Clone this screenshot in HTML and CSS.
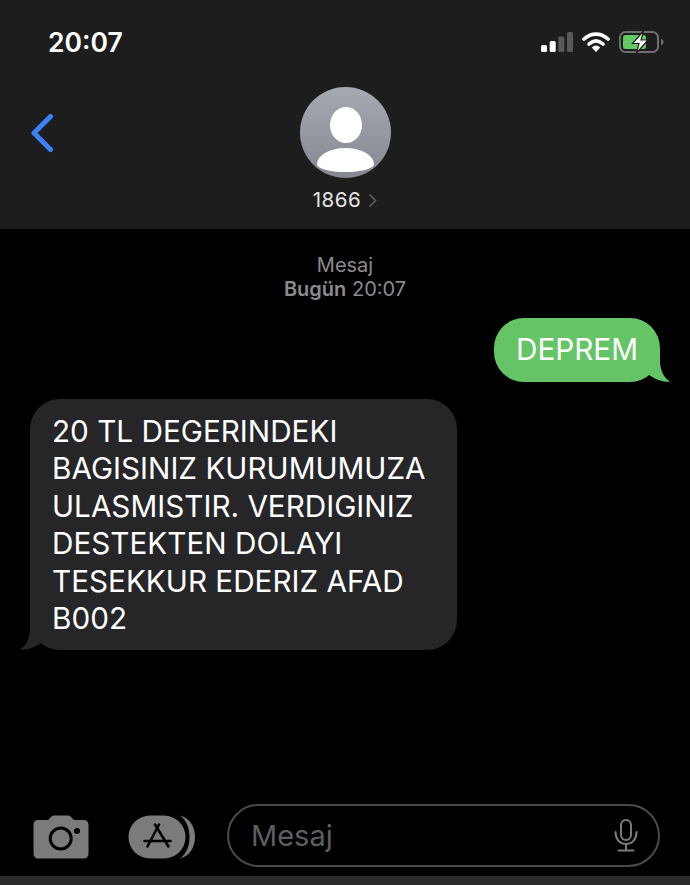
FILE: index.html
```html
<!DOCTYPE html>
<html lang="tr">
<head>
  <title>Mesaj</title>
  <meta content="width=device-width, initial-scale=1" name="viewport" />
  <link rel="stylesheet" href="styles.css">
</head>
<body>
  <header class="topBar">
    <div class="statusBar">
      <span class="clock">20:07</span>
      <div class="statusIcons">
        <svg class="signal" width="32" height="20" viewBox="0 0 32 20">
          <rect x="0" y="13" width="6" height="7" rx="1.5" fill="#fff"/>
          <rect x="8.700" y="9" width="6" height="11" rx="1.5" fill="#fff"/>
          <rect x="17.400" y="4.500" width="6" height="15.500" rx="1.5" fill="#59595b"/>
          <rect x="26" y="0" width="6" height="20" rx="1.5" fill="#59595b"/>
        </svg>
        <svg class="wifi" width="28" height="20" viewBox="0 0 28 20">
          <path d="M2 7C9.500 0.500 18.500 0.500 26 7" fill="none" stroke="#fff" stroke-width="3.600" stroke-linecap="round"/>
          <path d="M7 12C11.500 8 16.500 8 21 12" fill="none" stroke="#fff" stroke-width="3.600" stroke-linecap="round"/>
          <path d="M9.800 15.600C12.500 12.800 15.500 12.800 18.200 15.600L14 20Z" fill="#fff"/>
        </svg>
        <svg class="battery" width="45" height="22" viewBox="0 0 45 22">
          <rect x="1" y="1" width="38" height="20" rx="5.500" fill="none" stroke="#6f6f70" stroke-width="2"/>
          <rect x="4" y="4" width="23" height="14" rx="2.500" fill="#63c966"/>
          <path d="M42 8C44 8.600 44.500 9.800 44.500 11C44.500 12.200 44 13.400 42 14Z" fill="#6f6f70"/>
          <path d="M24.500 0L13.500 12.500H20L17.500 22L29 9H22Z" fill="#fff" stroke="#1d1d1d" stroke-width="1.200"/>
        </svg>
      </div>
    </div>
    <div class="contact">
      <svg class="backArrow" width="26" height="40" viewBox="0 0 26 40">
        <path d="M21.500 3.500L5 20L21.500 36.500" fill="none" stroke="#3b82f6" stroke-width="5" stroke-linecap="round" stroke-linejoin="round"/>
      </svg>
      <div class="avatar">
        <span class="avatarHead"></span>
        <span class="avatarBody"></span>
      </div>
      <div class="contactName">
        <span>1866</span>
        <svg width="9" height="15" viewBox="0 0 9 15">
          <path d="M1.500 1.500L7.500 7.500L1.500 13.500" fill="none" stroke="#5c5c5e" stroke-width="1.600"/>
        </svg>
      </div>
    </div>
  </header>

  <main class="thread">
    <div class="stamp">
      <div>Mesaj</div>
      <div><b>Bugün</b> 20:07</div>
    </div>
    <div class="bubble sent">
      DEPREM
      <svg class="tail" width="30" height="30" viewBox="0 0 30 30">
        <path d="M20 0V8C20 19 24 26 30 29.500C23 30.500 15 27 9 23L0 0Z" fill="#65c466"/>
      </svg>
    </div>
    <div class="bubble received">
      20 TL DEGERINDEKI<br>
      BAGISINIZ KURUMUMUZA<br>
      ULASMISTIR. VERDIGINIZ<br>
      DESTEKTEN DOLAYI<br>
      TESEKKUR EDERIZ AFAD<br>
      B002
      <svg class="tail" width="30" height="30" viewBox="0 0 30 30">
        <path d="M10 0V8C10 19 6 26 0 29.500C7 30.500 15 27 21 23L30 0Z" fill="#262629"/>
      </svg>
    </div>
  </main>

  <footer class="composer">
    <svg class="camera" width="56" height="44" viewBox="0 0 56 44">
      <path d="M5 5H15L18.500 1.500C19.200 0.800 20.200 0.500 21.200 0.500H34.800C35.800 0.500 36.800 0.800 37.500 1.500L41 5H51C53.500 5 55.500 7 55.500 9.500V39C55.500 41.500 53.500 43.500 51 43.500H5C2.500 43.500 0.500 41.500 0.500 39V9.500C0.500 7 2.500 5 5 5Z" fill="#7b7b7b"/>
      <circle cx="27.700" cy="23.500" r="10.500" fill="none" stroke="#000" stroke-width="3"/>
      <circle cx="44" cy="16" r="3" fill="#000"/>
    </svg>
    <svg class="apps" width="68" height="44" viewBox="0 0 68 44">
      <path d="M52 0.500C62 3 67 12 67 22C67 32 62 41 52 43.500C58.500 39 61.500 31 61.500 22C61.500 13 58.500 5 52 0.500Z" fill="#7b7b7b"/>
      <rect x="0.500" y="0.500" width="57" height="43" rx="21.500" fill="#7b7b7b"/>
      <g fill="none" stroke="#000" stroke-width="2.600" stroke-linecap="round">
        <path d="M31 9.500L19.500 31.500"/>
        <path d="M27 9.500L40.500 31.500"/>
        <path d="M16.500 26H42.500"/>
      </g>
    </svg>
    <div class="field">
      <span>Mesaj</span>
      <svg width="24" height="33" viewBox="0 0 24 33">
        <rect x="7" y="1" width="10" height="20" rx="5" fill="none" stroke="#7b7b7b" stroke-width="2"/>
        <path d="M1.500 13C1.500 20 5.500 25 12 25C18.500 25 22.500 20 22.500 13M12 25V31M4.500 31.500H19.500" fill="none" stroke="#7b7b7b" stroke-width="2" stroke-linecap="round"/>
      </svg>
    </div>
  </footer>
  <div class="homeStrip"></div>
</body>
</html>
```

FILE: styles.css
```css
* {
  box-sizing: border-box;
}
html, body {
  height: 100%;
}
body {
  margin: 0;
  display: flex;
  flex-direction: column;
  background-color: #000;
  color: #fff;
  font-family: Inter, "Liberation Sans", sans-serif;
  overflow: hidden;
}
.topBar {
  height: 229px;
  flex: none;
  background-color: #1d1d1d;
}
.statusBar {
  height: 87px;
  padding: 27px 26px 0 48px;
  display: flex;
  justify-content: space-between;
  align-items: flex-start;
}
.clock {
  font-size: 26.500px;
  line-height: 30px;
  font-weight: 600;
}
.statusIcons {
  display: flex;
  align-items: center;
  gap: 9px;
  margin-top: 4px;
}
.contact {
  position: relative;
  display: flex;
  flex-direction: column;
  align-items: center;
}
.backArrow {
  position: absolute;
  left: 29px;
  top: 26px;
}
.avatar {
  position: relative;
  width: 91px;
  height: 91px;
  border-radius: 50%;
  overflow: hidden;
  background: linear-gradient(#a7aab2, #858891);
}
.avatarHead {
  position: absolute;
  left: 30px;
  top: 20px;
  width: 32px;
  height: 36px;
  border-radius: 50%;
  background-color: #fff;
}
.avatarBody {
  position: absolute;
  left: 17px;
  top: 61px;
  width: 57px;
  height: 24px;
  border-radius: 50% 50% 50% 50% / 68% 68% 32% 32%;
  background-color: #fff;
}
.contactName {
  margin-top: 10px;
  display: flex;
  align-items: center;
  gap: 7px;
  font-size: 20.500px;
  line-height: 24px;
  color: #e4e4e4;
  letter-spacing: 0.5px;
}
.thread {
  flex: 1;
  padding: 24px 30px 0;
  display: flex;
  flex-direction: column;
}
.stamp {
  text-align: center;
  font-size: 20px;
  line-height: 24px;
  color: #8b8b8f;
}
.stamp b {
  font-weight: 600;
}
.bubble {
  position: relative;
  font-size: 29.700px;
  line-height: 37.400px;
}
.bubble .tail {
  position: absolute;
  bottom: 0;
}
.sent {
  align-self: flex-end;
  margin-top: 17px;
  padding: 13px 22px;
  height: 64px;
  border-radius: 30px;
  background-color: #65c466;
}
.sent .tail {
  right: -10px;
}
.received {
  align-self: flex-start;
  margin-top: 17px;
  padding: 14px 20px 13px 22px;
  width: 427px;
  height: 251px;
  border-radius: 30px;
  background-color: #262629;
}
.received .tail {
  left: -10px;
}
.composer {
  flex: none;
  display: flex;
  align-items: center;
  padding: 0 30px 0 33px;
}
.camera, .apps {
  margin-top: 2px;
}
.apps {
  margin-left: 39px;
}
.field {
  margin-left: 31px;
  flex: 1;
  height: 63px;
  padding: 0 20px 0 22px;
  display: flex;
  align-items: center;
  justify-content: space-between;
  border: 2px solid #4a4a4c;
  border-radius: 32px;
  font-size: 29px;
  color: #5e5e61;
}
.homeStrip {
  flex: none;
  height: 9px;
  margin-top: 9px;
  background-color: #2b2b2b;
}
```
